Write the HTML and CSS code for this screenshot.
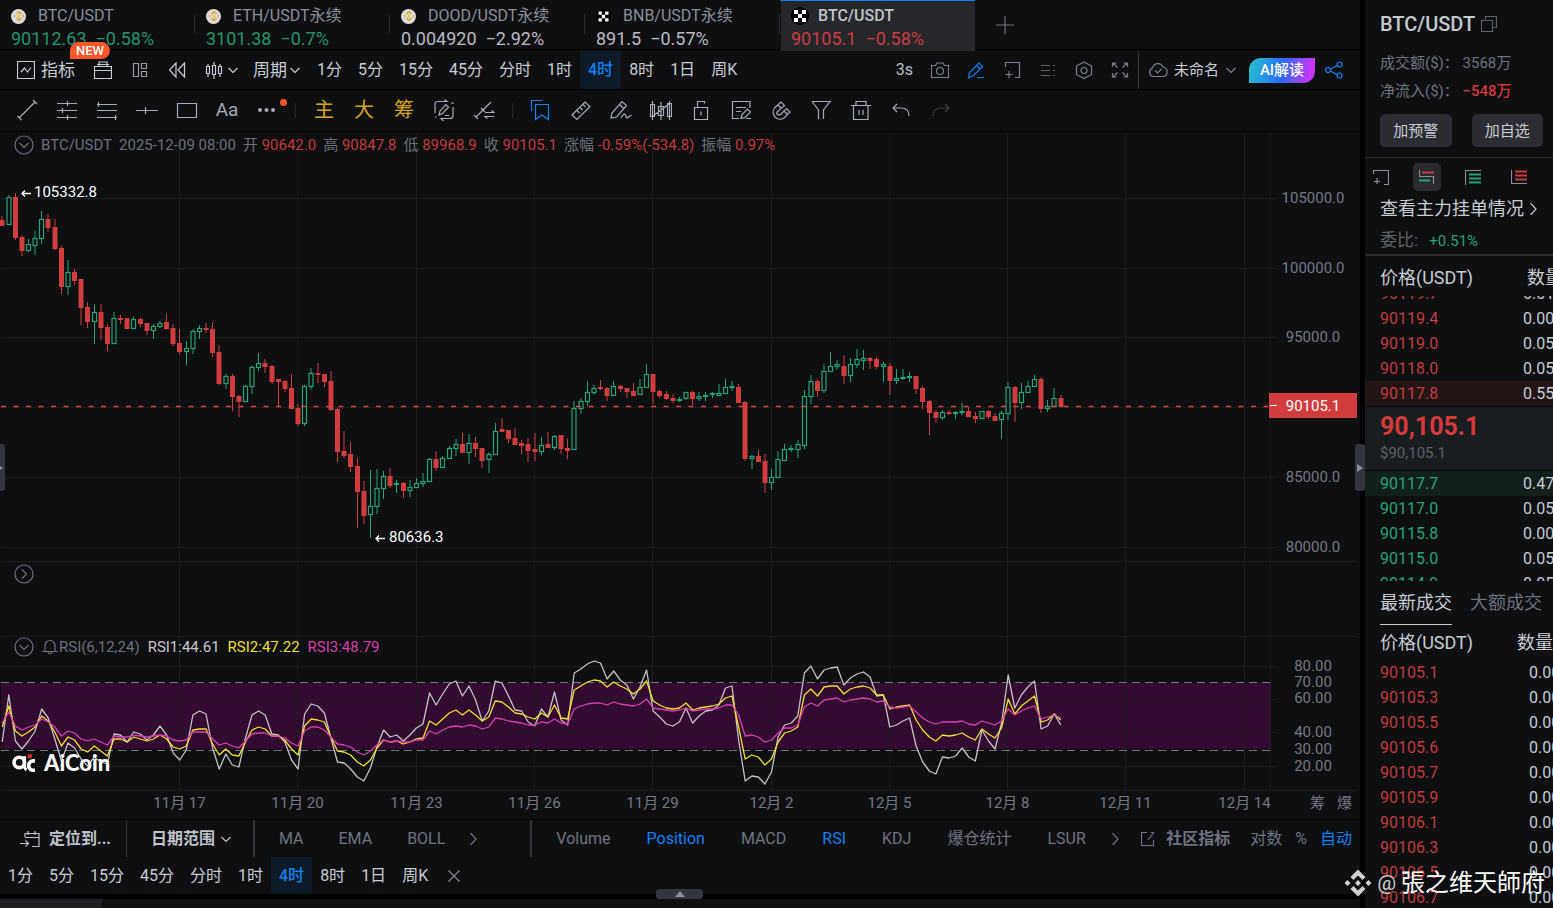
FILE: index.html
```html
<!DOCTYPE html>
<html lang="zh-CN">
<head>
    <meta charset="utf-8">
    <title>BTC/USDT</title>
    <link rel="stylesheet" href="styles.css">
</head>
<body>

    <!-- shared icon shapes -->
    <svg class="sprite" aria-hidden="true">
        <symbol id="bnb" viewBox="0 0 20 20">
            <path d="M10 1 5 6l2 2 3-3 3 3 2-2zM10 19l5-5-2-2-3 3-3-3-2 2zM1 10l2-2 2 2-2 2zM15 10l2-2 2 2-2 2zM8 10l2-2 2 2-2 2z" fill="currentColor" stroke="none"/>
        </symbol>
        <symbol id="okx" viewBox="0 0 18 18">
            <circle cx="9" cy="9" r="9" fill="#000" stroke="none"/>
            <path d="M3 3h4v4H3zM11 3h4v4h-4zM7 7h4v4H7zM3 11h4v4H3zM11 11h4v4h-4z" fill="#fff" stroke="none"/>
        </symbol>
        <symbol id="down" viewBox="0 0 12 12"><path d="M1.500 4L6 8.500 10.500 4"/></symbol>
        <symbol id="right" viewBox="0 0 12 12"><path d="M3.500 0l5.500 6-5.500 6"/></symbol>
    </svg>

    <div class="page">
        <main class="main">

            <nav class="tabs">
                <a class="tab up" href="#">
                    <span class="tab-name"><span class="coin"><svg><use href="#bnb"/></svg></span>BTC/USDT</span>
                    <span class="tab-price">90112.63 &nbsp;−0.58%</span>
                </a>
                <a class="tab up" href="#">
                    <span class="tab-name"><span class="coin"><svg><use href="#bnb"/></svg></span>ETH/USDT永续</span>
                    <span class="tab-price">3101.38 &nbsp;−0.7%</span>
                </a>
                <a class="tab" href="#">
                    <span class="tab-name"><span class="coin"><svg><use href="#bnb"/></svg></span>DOOD/USDT永续</span>
                    <span class="tab-price">0.004920 &nbsp;−2.92%</span>
                </a>
                <a class="tab" href="#">
                    <span class="tab-name"><svg class="okx"><use href="#okx"/></svg>BNB/USDT永续</span>
                    <span class="tab-price">891.5 &nbsp;−0.57%</span>
                </a>
                <a class="tab down active" href="#">
                    <span class="tab-name"><svg class="okx big"><use href="#okx"/></svg>BTC/USDT</span>
                    <span class="tab-price">90105.1 &nbsp;−0.58%</span>
                </a>
                <button class="add" aria-label="添加"><svg viewBox="0 0 18 18"><path d="M9 0v18M0 9h18"/></svg></button>
            </nav>

            <div class="toolbar">
                <button class="tool indicator">
                    <svg viewBox="0 0 18 18"><path d="M.5.5h17v17H.5zM4 11l3.500-4 3 4L14 6.500"/></svg>指标
                    <span class="badge">NEW</span>
                </button>
                <button class="tool" aria-label="工具箱"><svg viewBox="0 0 18 18"><path d="M.5 5.500h17v12H.5zM.5 9.500h17M5 5V1h8v4M3 3.500h12"/></svg></button>
                <button class="tool dim" aria-label="布局"><svg viewBox="0 0 18 18"><path d="M2.500 2.500h5v13h-5zM10.500 2.500h5v5h-5zM10.500 10.500h5v5h-5z"/></svg></button>
                <button class="tool" aria-label="回放"><svg viewBox="0 0 18 18"><path d="M8 2v14L1.500 9zM16.500 2v14L10 9z"/></svg></button>
                <button class="tool kline" aria-label="K线类型">
                    <svg viewBox="0 0 18 18"><path d="M1.500 5.500h3v7h-3zM7.500 4.500h3v9h-3zM13.500 5.500h3v7h-3zM3 3v2.500M3 12.500V16M9 1v3.500M9 13.500V18M15 3v2.500M15 12.500V16"/></svg>
                    <svg class="chev"><use href="#down"/></svg>
                </button>
                <button class="tool period">周期<svg class="chev"><use href="#down"/></svg></button>
                <div class="intervals">
                    <button>1分</button><button>5分</button><button>15分</button><button>45分</button><button>分时</button><button>1时</button><button class="on">4时</button><button>8时</button><button>1日</button><button>周K</button>
                </div>
                <div class="tools-right">
                    <button class="plain">3s</button>
                    <button aria-label="截图"><svg viewBox="0 0 18 18"><path d="M.5 4.500h4l1.500-2.500h6l1.500 2.500h4v12H.5z"/><circle cx="9" cy="10" r="3.500"/></svg></button>
                    <button class="blue" aria-label="画线"><svg viewBox="0 0 18 18"><path d="M1.500 16.500l1-5L12 2l3.500 3.500-9.500 9.500zM9.500 4.500L13 8M10 16.500h7"/></svg></button>
                    <button aria-label="添加图表"><svg viewBox="0 0 18 18"><path d="M2.500 6V1.500h14v15H12M6 10v7M2.500 13.500h7"/></svg></button>
                    <button class="faint" aria-label="列表"><svg viewBox="0 0 18 18"><path d="M2 4.500h9M2 9.500h9M2 14.500h9M14 4.500h2M14 9.500h2M14 14.500h2"/></svg></button>
                    <button aria-label="设置"><svg viewBox="0 0 18 18"><path d="M9 1l7.500 4v8.500L9 17.500l-7.500-4V5z"/><circle cx="9" cy="9.500" r="3"/></svg></button>
                    <button aria-label="全屏"><svg viewBox="0 0 18 18"><path d="M1.500 6V2h4M2 2l4.500 4.500M12.500 2h4v4M16 2l-4.500 4.500M1.500 12v4h4M2 16l4.500-4.500M12.500 16h4v-4M16 16l-4.500-4.500"/></svg></button>
                </div>
                <div class="account">
                    <button class="saved">
                        <svg class="cloud" viewBox="0 0 20 18"><path d="M5 15.500a4.500 4.500 0 0 1-.5-8.500 5.500 5.500 0 0 1 10.500-1 4.800 4.800 0 0 1 0 9.500zM7 9.500l2.500 2.500 4-4"/></svg>
                        未命名
                        <svg class="chev"><use href="#down"/></svg>
                    </button>
                    <button class="ai">AI解读</button>
                    <button class="blue" aria-label="分享"><svg viewBox="0 0 18 18"><circle cx="3" cy="9" r="2.500"/><circle cx="14.500" cy="3.500" r="2.500"/><circle cx="14.500" cy="14.500" r="2.500"/><path d="M5.500 8l6.500-3.500M5.500 10l6.500 3.500"/></svg></button>
                </div>
            </div>

            <div class="drawbar">
                <button aria-label="线段"><svg viewBox="0 0 22 22"><path d="M3 19L19 3M1.500 17l4 4M17 1l4 4"/></svg></button>
                <button aria-label="水平线"><svg viewBox="0 0 22 22"><path d="M1 4.500h20M1 11.500h20M1 18.500h20M11.500 2v5M6.500 9v5M11.500 16v5"/></svg></button>
                <button aria-label="平行线"><svg viewBox="0 0 22 22"><path d="M1 5.500h20M1 11.500h20M1 18.500h20M2.500 3v5M19.500 16v5"/></svg></button>
                <button aria-label="射线"><svg viewBox="0 0 22 22"><path d="M0 11.500h22M9.500 8v7"/></svg></button>
                <button aria-label="矩形"><svg viewBox="0 0 22 22"><path d="M1.500 4.500h19v14h-19z"/></svg></button>
                <button class="aa">Aa</button>
                <button class="more" aria-label="更多"><svg viewBox="0 0 22 22"><g fill="currentColor" stroke="none"><circle cx="4" cy="11" r="2"/><circle cx="10.500" cy="11" r="2"/><circle cx="17" cy="11" r="2"/></g></svg></button>
                <span class="sep"></span>
                <button class="gold">主</button>
                <button class="gold">大</button>
                <button class="gold">筹</button>
                <button aria-label="循环画线"><svg viewBox="0 0 22 22"><path d="M2 14V5q0-2.500 3-2.500h9l-2.500-2M2 18h1.500M20 8v9q0 2.500-3 2.500H8l2.500 2.500M18 4h2v1M6 16l1-4 6-6.500 2.500 2.500-6 6.500zM12 16.500h4"/></svg></button>
                <button aria-label="切换"><svg viewBox="0 0 22 22"><path d="M3 18L18 3M1 16l4 4M8 9l4 4M12 13.500h9l-2.500-2M21 17.500h-9l2.500 2"/></svg></button>
                <span class="sep"></span>
                <button class="blue" aria-label="收藏"><svg viewBox="0 0 22 22"><path d="M1.500 12V1.500H12M5.500 5.500h13v15L12 16l-6.500 4.500z"/></svg></button>
                <button aria-label="尺子"><svg viewBox="0 0 22 22"><path d="M2 16L15 3l5 4.500L7 20.500zM7 11.500l2.500 2.500M10 8.500l2.500 2.500M13 5.500l2.500 2.500"/></svg></button>
                <button aria-label="画笔"><svg viewBox="0 0 22 22"><path d="M1 19l1-5L12 2.500l4.500 4L6.500 18zM9.500 5.500l4 4M11 19c2-4 4-5 4.500-3s1 4 3 2l3-2"/></svg></button>
                <button aria-label="K线"><svg viewBox="0 0 22 22"><path d="M.5 5.500h4v12h-4zM8.500 7.500h5v9h-5zM17.500 4.500h4v13h-4zM2.500 2v19M11 3v18M19.500 2v19M3 17L19 5"/></svg></button>
                <button aria-label="锁定"><svg viewBox="0 0 22 22"><path d="M4.500 8.500h13v12h-13zM7.500 8.500v-6h7v2M11 12.500v4"/></svg></button>
                <button aria-label="笔记"><svg viewBox="0 0 22 22"><path d="M20 9V2.500H2.500v17H9M6 8.500h10M6 12.500h5M11 19.500l1-4 5.500-5.500 3 3-5.500 5.500zM16 19.500h5"/></svg></button>
                <button aria-label="磁铁"><svg viewBox="0 0 22 22"><path d="M11 3L4.500 9a7 7 0 0 0 9.500 10L20 13l-3.500-3.500-6 6a2 2 0 0 1-3-3l7-6zM8 6l3.500 3.500M14 12l3.500 3.500"/></svg></button>
                <button aria-label="筛选"><svg viewBox="0 0 22 22"><path d="M2 2.500h18L13.500 11v9M2 2.500L8.500 11v9"/></svg></button>
                <button aria-label="删除"><svg viewBox="0 0 22 22"><path d="M1 6.500h20M3.500 6.500v14h14.500V6.500M6 6V2.500h10V6M9 11v5M13 11v5"/></svg></button>
                <button aria-label="撤销"><svg viewBox="0 0 22 22"><path d="M7 5l-4 4 4 4M3 9h8c5 0 8 3 8 8"/></svg></button>
                <button class="disabled" aria-label="重做"><svg viewBox="0 0 22 22"><path d="M15 5l4 4-4 4M19 9h-8c-5 0-8 3-8 8"/></svg></button>
            </div>

            <section class="chart">
                <svg id="chart" class="plot" viewBox="0 132 1360 687"></svg>
                <div class="legend price-legend">
                    <button class="round" aria-label="收起"><svg viewBox="0 0 20 20"><circle cx="10" cy="10" r="9"/><path d="M5.500 8l4.500 4.500L14.500 8"/></svg></button>
                    <span>BTC/USDT</span><span>2025-12-09 08:00</span>
                    <span>开 <b>90642.0</b></span><span>高 <b>90847.8</b></span><span>低 <b>89968.9</b></span><span>收 <b>90105.1</b></span>
                    <span>涨幅 <b>-0.59%(-534.8)</b></span><span>振幅 <b>0.97%</b></span>
                </div>
                <div class="legend volume-legend">
                    <button class="round" aria-label="展开"><svg viewBox="0 0 20 20"><circle cx="10" cy="10" r="9"/><path d="M8 5.500l4.500 4.500L8 14.500"/></svg></button>
                </div>
                <div class="legend rsi-legend">
                    <button class="round" aria-label="收起"><svg viewBox="0 0 20 20"><circle cx="10" cy="10" r="9"/><path d="M5.500 8l4.500 4.500L14.500 8"/></svg></button>
                    <span class="bell"><svg viewBox="0 0 16 16"><path d="M3 12.500V6.500a5 5 0 0 1 10 0v6M0 12.500h16M6 13q2 4 4 0"/></svg>RSI(6,12,24)</span>
                    <span class="rsi1">RSI1:44.61</span><span class="rsi2">RSI2:47.22</span><span class="rsi3">RSI3:48.79</span>
                </div>
                <div class="brand">
                    <svg viewBox="0 0 24 20"><circle cx="7" cy="9" r="5" fill="none" stroke="#fff" stroke-width="3.500"/><path d="M12 3v10q0 2 2 3" fill="none" stroke="#fff" stroke-width="3"/><path d="M22 7.500h-1.500a4.200 4.200 0 0 0 0 9H22" fill="none" stroke="#fff" stroke-width="3.500"/><path d="M15 1h4v4h-4z" fill="#c4322a" stroke="none"/></svg>
                    AiCoin
                </div>
                <button class="handle left" aria-label="展开左栏"></button>
                <button class="handle right" aria-label="收起右栏"></button>
            </section>

            <div class="bottombar">
                <button class="locate"><svg viewBox="0 0 20 18"><path d="M5 7V3.500h14v13h-7M5 7.500h14M8 1v4M15 1v4M0 13.500h8M5.500 10.500l3 3-3 3"/></svg>定位到...</button>
                <button class="range">日期范围<svg class="chev"><use href="#down"/></svg></button>
                <div class="group main-ind">
                    <button>MA</button><button>EMA</button><button>BOLL</button>
                    <button class="next" aria-label="更多主图指标"><svg class="chev"><use href="#right"/></svg></button>
                </div>
                <div class="group sub-ind">
                    <button>Volume</button><button class="blue">Position</button><button>MACD</button><button class="blue">RSI</button><button>KDJ</button><button>爆仓统计</button><button>LSUR</button>
                    <button class="next" aria-label="更多副图指标"><svg class="chev"><use href="#right"/></svg></button>
                </div>
                <div class="scale">
                    <button class="community"><svg viewBox="0 0 14 14"><path d="M6 .5H.5v13h12V8M7 8l6-7.500M10 .5h3"/></svg>社区指标</button>
                    <button>对数</button><button>%</button><button class="blue">自动</button>
                </div>
            </div>

            <div class="timebar">
                <div class="intervals">
                    <button>1分</button><button>5分</button><button>15分</button><button>45分</button><button>分时</button><button>1时</button><button class="on">4时</button><button>8时</button><button>1日</button><button>周K</button>
                </div>
                <button class="close" aria-label="关闭"><svg viewBox="0 0 12 12"><path d="M.5.5l11 11M11.500.5l-11 11"/></svg></button>
            </div>
            <div class="footer"><button class="handle bottom" aria-label="展开底栏"></button></div>
        </main>

        <aside class="side">
            <h1>BTC/USDT <svg viewBox="0 0 16 16"><path d="M4.500 3.500v-3h11v11h-3M.5 4.500h11v11H.5z"/></svg></h1>
            <p class="stat">成交额($)： <span>3568万</span></p>
            <p class="stat">净流入($)： <b>−548万</b></p>
            <div class="actions">
                <button>加预警</button>
                <button>加自选</button>
            </div>
            <div class="views">
                <button aria-label="添加"><svg viewBox="0 0 16 16"><path d="M.5 5V1.500h15v14H11M4 9v6M1 12.500h6"/></svg></button>
                <button class="on" aria-label="买卖盘"><svg viewBox="0 0 16 16"><path d="M.5 1v6.500h14V15"/><path class="r" d="M3 3.500h12"/><path class="g" d="M0 11.500h11"/></svg></button>
                <button aria-label="买盘"><svg viewBox="0 0 16 16"><path d="M.5 16V1.500H16"/><path class="g" d="M4 5.500h12M4 9.500h12M4 13.500h12"/></svg></button>
                <button aria-label="卖盘"><svg viewBox="0 0 16 16"><path d="M.5 1v13.500H16"/><path class="r" d="M4 2.500h12M4 6.500h12M4 10.500h12"/></svg></button>
            </div>
            <a class="orders-link" href="#">查看主力挂单情况 <svg class="chev"><use href="#right"/></svg></a>
            <p class="ratio">委比: <span>+0.51%</span></p>

            <div class="book-head"><span>价格(USDT)</span><span>数量</span></div>
            <div class="book asks">
                <table>
                    <tr><td>90119.7</td><td>0.01</td></tr>
                    <tr><td>90119.4</td><td>0.00</td></tr>
                    <tr><td>90119.0</td><td>0.05</td></tr>
                    <tr><td>90118.0</td><td>0.05</td></tr>
                    <tr class="best"><td>90117.8</td><td>0.55</td></tr>
                </table>
            </div>
            <div class="last">
                <strong>90,105.1</strong>
                <span>$90,105.1</span>
            </div>
            <div class="book bids">
                <table>
                    <tr class="best"><td>90117.7</td><td>0.47</td></tr>
                    <tr><td>90117.0</td><td>0.05</td></tr>
                    <tr><td>90115.8</td><td>0.00</td></tr>
                    <tr><td>90115.0</td><td>0.05</td></tr>
                    <tr><td>90114.9</td><td>0.05</td></tr>
                </table>
            </div>
            <div class="trade-tabs">
                <button class="on">最新成交</button>
                <button>大额成交</button>
            </div>
            <div class="book trades">
                <table>
                    <tr><th>价格(USDT)</th><th>数量</th></tr>
                    <tr><td>90105.1</td><td>0.00</td></tr>
                    <tr><td>90105.3</td><td>0.00</td></tr>
                    <tr><td>90105.5</td><td>0.00</td></tr>
                    <tr><td>90105.6</td><td>0.00</td></tr>
                    <tr><td>90105.7</td><td>0.00</td></tr>
                    <tr><td>90105.9</td><td>0.00</td></tr>
                    <tr><td>90106.1</td><td>0.00</td></tr>
                    <tr><td>90106.3</td><td>0.00</td></tr>
                    <tr><td>90106.5</td><td>0.00</td></tr>
                    <tr><td>90106.7</td><td>0.00</td></tr>
                </table>
            </div>
        </aside>
    </div>

    <div class="author"><svg><use href="#bnb"/></svg><span>@</span>張之维天師府</div>

    <script src="chart.js"></script>
</body>
</html>
```

FILE: styles.css
```css
* {
    box-sizing: border-box;
}

body {
    margin: 0;
    height: 100vh;
    overflow: hidden;
    position: relative;
    background: #000;
    color: #c8ccd3;
    font: 16px/20px Roboto, "Noto Sans CJK SC", sans-serif;
}

button {
    display: flex;
    align-items: center;
    justify-content: center;
    padding: 0;
    border: none;
    background: none;
    color: inherit;
    font: inherit;
    white-space: nowrap;
    cursor: pointer;
}

a {
    color: inherit;
    text-decoration: none;
}

svg {
    width: 18px;
    height: 18px;
    flex: none;
    fill: none;
    stroke: currentColor;
    stroke-width: 1.2;
}

.sprite {
    position: absolute;
    width: 0;
    height: 0;
}

.chev {
    width: 12px;
    height: 12px;
}

.page {
    display: flex;
    gap: 5px;
    height: 100%;
}

.main {
    flex: 1;
    min-width: 0;
    display: flex;
    flex-direction: column;
    background: #0d0f11;
}

button.blue,
.blue {
    color: #1281f5;
}

/* symbol tabs */
.tabs {
    display: flex;
    height: 50px;
    flex: none;
    border-bottom: 1px solid #000;
}

.tab {
    position: relative;
    width: 195px;
    padding: 6px 11px 0;
    color: #b9bcc2;
}

.tab:not(.active)::after {
    content: "";
    position: absolute;
    right: 0;
    top: 14px;
    width: 1px;
    height: 20px;
    background: #2a2c30;
}

.tab-name {
    display: flex;
    align-items: center;
    gap: 12px;
    color: #8a909c;
}

.tab-price {
    display: block;
    margin-top: 3px;
    font-size: 18px;
}

.tab.up {
    color: #25936b;
}

.tab.down {
    color: #cc3c3c;
}

.tab.active {
    height: 51px;
    padding: 5px 10px 0;
    border-top: 1px solid #1281f5;
    border-left: 1px solid #0d0f11;
    background: #25272b;
    z-index: 1;
}

.active .tab-name {
    gap: 9px;
    color: #c0c3c8;
    font-weight: 500;
}

.coin {
    display: flex;
    width: 15px;
    height: 15px;
    align-items: center;
    justify-content: center;
    border-radius: 50%;
    background: #dcdcdc;
    color: #e0ad2c;
}

.coin svg {
    width: 12px;
    height: 12px;
}

.okx {
    width: 15px;
    height: 15px;
}

.okx.big {
    width: 18px;
    height: 18px;
}

.add {
    width: 59px;
    color: #6b7078;
}

/* chart toolbar */
.toolbar {
    display: flex;
    align-items: stretch;
    height: 40px;
    flex: none;
    padding: 1px 17px 0;
    border-bottom: 1px solid #000;
}

.tool {
    position: relative;
    margin-right: 19px;
}

.tool.dim {
    color: #9a9da3;
}

.indicator {
    gap: 6px;
    font-size: 17px;
}

.badge {
    position: absolute;
    left: 53px;
    top: -9px;
    width: 40px;
    height: 17px;
    border-radius: 9px 9px 9px 0;
    background: #fb5728;
    color: #fff;
    font: 500 13px/17px Roboto, sans-serif;
}

.kline {
    gap: 4px;
    margin-right: 14px;
}

.period {
    gap: 2px;
    margin-right: 8px;
    font-size: 17px;
}

.intervals {
    display: flex;
}

.intervals button {
    padding: 0 8px;
}

.intervals .on {
    background: #0d1a28;
    color: #1281f5;
    font-weight: 500;
}

.tools-right {
    display: flex;
    gap: 18px;
    margin-left: auto;
    padding-right: 9px;
    color: #7a7f8b;
}

.tools-right .plain {
    color: #bcc0c7;
}

.tools-right .faint {
    color: #5b5e65;
}

.account {
    display: flex;
    align-items: center;
    padding-left: 9px;
    border-left: 1px solid #33353a;
}

.saved {
    gap: 6px;
    margin-right: 12px;
    font-size: 15px;
}

.saved svg {
    color: #7a7f8b;
}

.cloud {
    width: 20px;
}

.ai {
    width: 66px;
    height: 25px;
    margin-right: 10px;
    border-radius: 12px 0 12px 0;
    background: linear-gradient(100deg, #25c5cc, #2a6bff 50%, #c437ff 90%);
    color: #fff;
    font-size: 15px;
    font-weight: 500;
}

/* drawing tools */
.drawbar {
    display: flex;
    height: 42px;
    flex: none;
    padding: 0 0 1px 7px;
    border-bottom: 1px solid #000;
    color: #a6abb6;
}

.drawbar button {
    width: 40px;
}

.drawbar svg {
    width: 22px;
    height: 22px;
}

.drawbar .aa {
    font-size: 19px;
}

.drawbar .gold {
    color: #d5a520;
    font-size: 20px;
}

.drawbar .disabled {
    color: #3d4046;
}

.more {
    position: relative;
}

.more::after {
    content: "";
    position: absolute;
    left: 33px;
    top: 9px;
    width: 7px;
    height: 7px;
    border-radius: 50%;
    background: #fb5728;
}

.sep {
    width: 1px;
    height: 15px;
    margin: 13px 8px 0;
    background: #24262a;
}

/* chart */
.chart {
    position: relative;
    flex: none;
}

.plot {
    display: block;
    width: 100%;
    height: auto;
    stroke: none;
    font-size: 15px;
}

.grid {
    stroke: #1a1c1f;
    stroke-width: 1;
}

.rise {
    fill: #0d0f11;
    stroke: #25a37b;
}

.rise-wick {
    fill: #25a37b;
}

.fall {
    fill: #d13d3d;
}

.band {
    fill: #330b31;
}

.band-edge {
    stroke: #74777c;
    stroke-dasharray: 8 5;
}

.price-line {
    stroke: #e04242;
    stroke-width: 1.5;
    stroke-dasharray: 5 7.5;
}

.line {
    fill: none;
    stroke-width: 1.3;
    stroke-linejoin: round;
}

.line1 {
    stroke: #c2c2c5;
}

.line2 {
    stroke: #f0df33;
}

.line3 {
    stroke: #d83fae;
}

.axis {
    fill: #747885;
}

.mark {
    fill: #fff;
}

.mark-arrow {
    stroke: #fff;
    stroke-width: 1.3;
}

.legend {
    position: absolute;
    left: 14px;
    display: flex;
    align-items: center;
    gap: 8px;
    color: #6b6f7b;
    font-size: 15px;
    white-space: nowrap;
}

.legend b {
    color: #c53a3a;
    font-weight: 400;
}

.price-legend {
    top: 3px;
    gap: 7px;
}

.volume-legend {
    top: 432px;
}

.rsi-legend {
    top: 505px;
}

.round svg {
    width: 20px;
    height: 20px;
}

.bell {
    display: flex;
    align-items: center;
    gap: 1px;
}

.bell svg {
    width: 16px;
    height: 16px;
}

.rsi1 {
    color: #c8c8ca;
}

.rsi2 {
    color: #f0df33;
}

.rsi3 {
    color: #d83fae;
}

.brand {
    position: absolute;
    left: 12px;
    bottom: 44px;
    display: flex;
    align-items: center;
    gap: 7px;
    color: #fff;
    font: 900 22px/24px Lato, sans-serif;
}

.brand svg {
    width: 25px;
    height: 21px;
}

.handle {
    position: absolute;
    width: 10px;
    height: 47px;
    border-radius: 3px;
    background: #34363f;
}

.handle::after {
    content: "";
    border: 4px solid transparent;
    border-left: 6px solid #8d929c;
    border-right: 0;
}

.handle.left {
    left: -5px;
    top: 312px;
}

.handle.right {
    right: -5px;
    top: 312px;
    z-index: 2;
}

.handle.bottom {
    left: 656px;
    top: -10px;
    width: 47px;
    height: 10px;
}

.handle.bottom::after {
    border: 5px solid transparent;
    border-bottom: 6px solid #8d929c;
    border-top: 0;
}

/* indicator bar */
.bottombar {
    display: flex;
    height: 38px;
    flex: none;
    border-top: 1px solid #000;
    color: #6e7380;
}

.locate,
.range {
    padding: 0 15px 0 20px;
    color: #bfc2c8;
    font-weight: 700;
}

.locate {
    gap: 9px;
}

.locate svg {
    width: 20px;
}

.range {
    gap: 5px;
    padding: 0 21px 0 24px;
    border-left: 1px solid #33353a;
}

.group {
    display: flex;
    gap: 36px;
    padding-left: 24px;
    border-left: 2px solid #33353a;
}

.main-ind {
    gap: 35px;
    padding-right: 51px;
}

.next {
    margin-left: -13px;
}

.scale {
    display: flex;
    gap: 13px;
    margin-left: auto;
    padding-right: 8px;
}

.community {
    gap: 11px;
    margin-right: 7px;
    font-weight: 700;
}

.community svg {
    width: 14px;
    height: 14px;
}

.timebar {
    display: flex;
    height: 37px;
    flex: none;
}

.close {
    width: 36px;
    color: #858991;
}

.close svg {
    width: 12px;
    height: 12px;
}

.footer {
    position: relative;
    flex: 1;
    border-top: 5px solid #000;
    background: linear-gradient(#1e1f23, #1e1f23) 0 0 / 102px 100% no-repeat, #0e0f11;
}

/* order book */
.side {
    display: flex;
    flex-direction: column;
    width: 188px;
    overflow: hidden;
    background: #0d0f11;
    white-space: nowrap;
}

.side h1 {
    display: flex;
    align-items: center;
    gap: 6px;
    margin: 12px 15px 14px;
    color: #c6c9cf;
    font-size: 20px;
    line-height: 24px;
    font-weight: 500;
}

.side h1 svg {
    width: 16px;
    height: 16px;
    color: #5c6068;
}

.stat {
    margin: 3px 15px 5px;
    color: #6e7380;
    font-size: 15px;
}

.stat b {
    color: #d33a3a;
    font-weight: 500;
}

.actions {
    display: flex;
    gap: 20px;
    padding: 8px 10px 10px 15px;
    border-bottom: 1px solid #2b2d31;
}

.actions button {
    flex: 1;
    height: 33px;
    border-radius: 5px;
    background: #2b2d33;
    font-size: 15px;
}

.views {
    display: flex;
    gap: 18px;
    padding: 5px 2px 4px;
    color: #8a8e97;
}

.views button {
    width: 28px;
    height: 28px;
    border-radius: 5px;
}

.views .on {
    background: #2a2b2f;
}

.views svg {
    width: 16px;
    height: 16px;
}

.r,
.g {
    stroke-width: 2;
}

.r {
    stroke: #cc3c3c;
}

.g {
    stroke: #25a37b;
}

.orders-link {
    display: flex;
    align-items: center;
    gap: 3px;
    padding: 0 15px;
    font-size: 18px;
    line-height: 28px;
}

.ratio {
    margin: 0;
    padding: 7px 15px 3px;
    border-bottom: 2px solid #2b2d31;
    color: #5f636b;
    font-size: 17px;
}

.ratio span {
    margin-left: 7px;
    color: #25a37b;
    font-size: 15px;
}

.book-head {
    display: flex;
    gap: 54px;
    padding: 4px 15px 0;
    font-size: 18px;
    line-height: 36px;
}

.book {
    display: flex;
    flex-direction: column;
    flex: none;
    overflow: hidden;
}

.asks,
.bids {
    height: 110px;
}

.asks {
    justify-content: flex-end;
}

table {
    width: 100%;
    flex: none;
    border-collapse: collapse;
    table-layout: fixed;
}

th,
td {
    height: 25px;
    padding: 0;
    text-align: left;
    font-weight: 400;
}

td:first-child,
th:first-child {
    width: 158px;
    padding-left: 15px;
    color: #c23b3b;
}

.bids td:first-child {
    color: #25a37b;
}

.asks .best {
    background: #231416;
}

.bids .best {
    background: #11201b;
}

.last {
    display: flex;
    flex-direction: column;
    height: 65px;
    flex: none;
    padding: 6px 15px;
    border: solid #050607;
    border-width: 1px 0;
    background: #1a1d20;
}

.last strong {
    color: #d33a3a;
    font-size: 25px;
    line-height: 28px;
}

.last span {
    margin-top: 2px;
    color: #5c6068;
    font-size: 15px;
}

.trade-tabs {
    display: flex;
    gap: 18px;
    padding: 0 15px;
    color: #6e7380;
    font-size: 18px;
}

.trade-tabs button {
    height: 44px;
}

.trade-tabs .on {
    border-bottom: 1px solid #c8ccd3;
    color: #c8ccd3;
}

.trades {
    flex: 1;
}

.trades th {
    height: 35px;
    font-size: 18px;
}

.trades th:first-child {
    width: 152px;
    color: #c8ccd3;
}

.trades td:last-child {
    padding-left: 12px;
}

/* author mark */
.author {
    position: absolute;
    right: 8px;
    bottom: 8px;
    display: flex;
    align-items: center;
    color: #fff;
    font-size: 24px;
    line-height: 34px;
    white-space: nowrap;
}

.author svg {
    width: 30px;
    height: 30px;
    color: #d0d0d0;
}

.author span {
    margin: 0 5px 0 4px;
    color: #d0d0d0;
    font-size: 21px;
}
```

FILE: chart.js
```js
// candles: direction, high, top, bottom, low
var candles = "r216,220,226,226 g195,197,225,225 r193,197,238,240 r235,237,251,256 g239,244,251,252 g231,238,246,255 " +
    "g211,219,239,244 r214,219,228,232 r219,227,249,250 r246,248,287,294 g260,272,287,295 r269,272,281,285 " +
    "r279,279,308,325 r302,307,322,328 g304,312,322,344 r304,312,328,340 r324,327,344,351 g312,318,344,344 " +
    "r315,318,320,324 r318,318,329,329 g317,319,329,329 r318,319,324,327 r323,323,331,335 g324,326,331,339 " +
    "g321,323,327,328 r314,322,329,330 r324,328,344,346 r329,343,352,354 g341,348,352,365 g329,331,349,354 " +
    "g325,328,332,339 r323,328,330,333 r322,329,353,357 r345,352,384,385 g374,376,384,389 r374,376,397,411 " +
    "r395,396,402,417 g385,386,402,402 g365,367,387,394 g353,363,368,371 r359,363,367,373 r365,366,382,384 " +
    "r379,379,382,407 r380,381,389,392 r374,388,409,409 r404,408,424,426 g385,386,424,426 g368,373,387,390 " +
    "r363,373,375,383 r374,374,382,387 r371,381,410,411 r408,409,452,462 r431,451,456,458 r442,454,467,472 " +
    "r458,466,492,528 r481,491,516,524 g470,506,515,538 g469,488,507,514 g471,476,489,499 r468,476,486,488 " +
    "g480,483,485,493 r482,483,491,498 g480,487,491,497 g478,483,488,488 g473,481,484,487 g458,459,482,482 " +
    "r451,459,468,471 g456,458,468,468 g446,448,459,459 g439,444,449,456 r433,444,453,453 g434,443,453,464 " +
    "r437,443,449,457 r448,448,461,468 g452,454,460,473 g423,431,455,455 r418,429,432,432 r430,430,439,443 " +
    "r428,438,445,445 r440,443,446,454 r438,444,451,462 r433,449,452,461 g437,445,452,455 r432,444,448,448 " +
    "g435,436,448,450 r435,435,449,454 r439,448,451,459 g401,408,450,450 g398,401,409,414 g381,392,402,406 " +
    "g385,388,393,395 r380,387,389,390 r387,388,396,401 g381,386,396,396 r385,386,389,392 r388,388,392,398 " +
    "r383,391,396,396 g379,387,395,395 g364,374,388,388 r374,374,392,404 r390,391,396,398 r391,394,399,400 " +
    "r394,398,401,403 g397,399,401,402 g392,392,399,400 r391,392,399,405 g392,396,399,401 g392,395,397,401 " +
    "g392,393,395,398 g384,393,396,396 g379,387,394,394 g381,386,388,391 r384,387,403,403 r401,402,459,461 " +
    "g455,456,459,469 r450,456,462,462 r454,461,483,493 g469,477,483,490 g451,459,478,478 g444,449,461,461 " +
    "g445,448,450,452 g440,444,450,458 g390,396,446,449 g375,381,397,404 r379,381,391,397 g364,371,391,393 " +
    "g352,366,372,372 g360,364,367,370 r355,366,376,384 g358,364,376,382 g349,359,365,368 g350,358,361,370 " +
    "r357,358,361,369 r357,359,367,369 g362,364,367,382 r363,366,381,395 g369,378,381,384 g369,377,379,380 " +
    "g372,376,378,382 r376,376,389,394 r386,388,402,409 r400,401,413,435 r410,412,418,423 g410,412,418,420 " +
    "r410,412,414,415 g411,412,414,419 g403,411,413,415 r407,411,417,417 r412,416,419,423 g411,411,419,419 " +
    "r410,411,417,419 r413,416,421,421 g411,413,420,439 g382,387,414,420 r386,387,403,422 g383,392,403,409 " +
    "g381,386,393,393 g375,379,387,387 r377,379,409,413 g400,406,409,412 g388,398,407,407 r395,398,407,408";

var rsi1 = [742,695,741,749,741,731,709,718,739,761,743,748,759,766,757,762,764,734,735,742,732,734,740,735,726,735,753,
    760,750,715,711,714,748,769,754,765,767,738,715,711,715,734,735,742,760,769,714,704,706,713,738,762,763,769,
    777,781,768,747,730,737,735,741,735,728,724,693,705,694,684,681,696,686,700,721,711,681,683,696,710,711,722,
    726,709,717,692,720,725,673,669,664,661,663,679,671,680,685,699,687,670,711,717,724,726,722,708,723,716,711,
    710,705,688,686,740,781,776,777,784,772,737,725,723,716,673,666,679,670,668,667,685,678,674,672,677,696,695,
    727,725,721,718,746,762,771,774,757,758,756,748,757,761,730,741,749,723,675,708,695,687,681,729,726,714,725];

var rsi2 = [727,706,731,736,732,727,716,721,732,746,737,740,749,752,746,751,756,739,739,742,737,739,741,739,735,739,747,
    749,746,730,729,729,744,755,749,755,756,742,730,727,729,736,736,740,749,755,726,719,720,722,737,751,752,755,
    762,766,760,748,740,742,741,744,742,739,738,721,725,719,713,710,715,710,715,721,717,701,702,707,713,714,717,
    719,713,717,705,718,719,690,686,682,680,681,687,682,686,689,694,689,681,701,705,708,709,708,703,710,708,707,
    706,704,698,696,727,759,755,757,765,759,742,733,731,727,695,689,696,687,686,686,694,689,687,686,688,695,695,
    709,707,706,705,720,730,737,741,735,736,735,733,737,740,729,734,738,728,699,714,706,701,696,722,720,714,720];

var rsi3 = [723,712,726,730,727,725,719,722,727,736,731,733,739,741,739,742,745,736,737,737,735,736,737,736,735,736,740,
    741,740,732,732,732,739,745,743,746,748,741,734,733,733,736,736,738,743,746,731,727,727,730,737,744,745,747,
    752,755,751,745,740,742,741,742,742,740,740,731,734,730,727,726,727,725,726,729,727,718,719,721,722,723,725,
    725,722,723,719,723,724,709,706,704,703,703,705,702,704,705,706,704,699,708,709,710,711,710,708,711,710,709,
    709,708,705,705,715,736,735,737,742,740,733,728,728,725,707,703,706,700,699,698,702,700,699,698,699,702,701,
    707,708,707,706,712,718,722,724,722,722,722,721,724,725,721,723,725,721,709,715,711,708,706,719,717,715,718];

var step = 6.575;
var out = "";

function x(i) {
    return 2.2 + i * step;
}

function hline(y, to, cls) {
    out += '<line class="' + cls + '" x1="1" x2="' + to + '" y1="' + y + '" y2="' + y + '"/>';
}

function text(px, py, str, cls, anchor) {
    out += '<text class="' + cls + '" x="' + px + '" y="' + py + '" text-anchor="' + (anchor || "start") + '">' + str + '</text>';
}

function line(values, cls) {
    var points = values.map(function (v, i) {
        return x(i).toFixed(1) + "," + v;
    });
    out += '<polyline class="line ' + cls + '" points="' + points.join(" ") + '"/>';
}

// RSI band between 30 and 70
out += '<rect class="band" x="1" y="683" width="1269" height="66"/>';

// grid
[198.5, 268.5, 337.5, 407.5, 477.5, 547.5, 666.5, 699.5, 732.5, 766.5].forEach(function (y) {
    hline(y, 1277, "grid");
});
[561.5, 636.5, 790.5].forEach(function (y) {
    hline(y, 1357, "grid");
});
var dates = ["11月 17", "11月 20", "11月 23", "11月 26", "11月 29", "12月 2", "12月 5", "12月 8", "12月 11", "12月 14"];
dates.forEach(function (d, i) {
    var gx = Math.round(179 + i * 118.3) + 0.5;
    out += '<line class="grid" x1="' + gx + '" x2="' + gx + '" y1="133" y2="790"/>';
    text(gx, 808, d, "axis", "middle");
});
out += '<line class="grid" x1="1270.5" x2="1270.5" y1="134" y2="790"/>';
hline(682.5, 1270, "band-edge");
hline(750.5, 1270, "band-edge");

// candles
candles.split(" ").forEach(function (c, i) {
    var v = c.slice(1).split(",").map(Number);
    var cx = Math.round(x(i) * 2) / 2;
    var h = Math.max(v[2] - v[1], 2);
    if (c[0] === "r") {
        out += '<rect class="fall" x="' + (cx - 0.5) + '" y="' + v[0] + '" width="1" height="' + (v[3] - v[0]) + '"/>';
        out += '<rect class="fall" x="' + (cx - 2.5) + '" y="' + v[1] + '" width="5" height="' + h + '"/>';
    } else {
        out += '<rect class="rise-wick" x="' + (cx - 0.5) + '" y="' + v[0] + '" width="1" height="' + (v[3] - v[0]) + '"/>';
        out += '<rect class="rise" x="' + (cx - 2) + '" y="' + (v[1] + 0.5) + '" width="4" height="' + (h - 1) + '"/>';
    }
});

line(rsi1, "line1");
line(rsi2, "line2");
line(rsi3, "line3");

// high and low marks
out += '<path class="mark-arrow" fill="none" d="M31 193.5H22M25 190.500l-3 3 3 3M385 538.500h-9M379 535.500l-3 3 3 3"/>';
text(34, 197, "105332.8", "mark");
text(389, 542, "80636.3", "mark");

// price axis
[["105000.0", 203], ["100000.0", 273], ["95000.0", 342], ["85000.0", 482], ["80000.0", 552]].forEach(function (p) {
    text(1313, p[1], p[0], "axis", "middle");
});
[["80.00", 671], ["70.00", 687], ["60.00", 703], ["40.00", 737], ["30.00", 754], ["20.00", 771]].forEach(function (p) {
    text(1313, p[1], p[0], "axis", "middle");
});
text(1310, 808, "筹", "axis");
text(1337, 808, "爆", "axis");

// current price
hline(406.5, 1269, "price-line");
out += '<rect class="fall" x="1269" y="393" width="88" height="25"/><rect class="mark" x="1270" y="405" width="7" height="1"/>';
text(1313, 411, "90105.1", "mark", "middle");

document.getElementById("chart").innerHTML = out;
```
